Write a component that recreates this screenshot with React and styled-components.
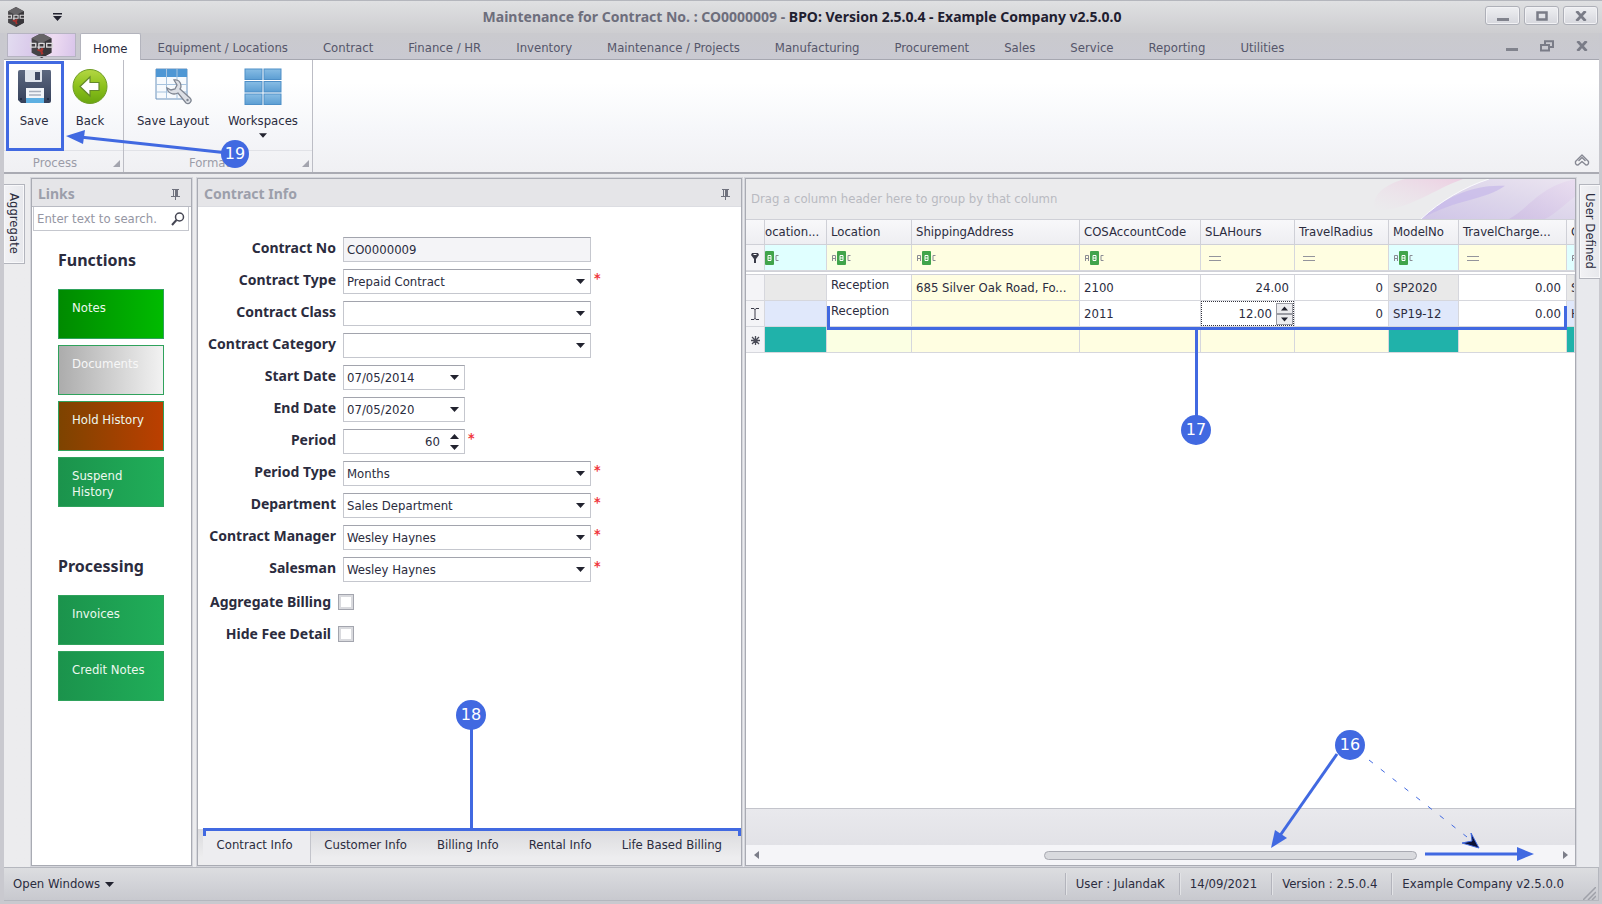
import React from "react";
import styled, { createGlobalStyle, css } from "styled-components";

const ACCENT = "#4169e1";
const LINE = "#a9abb3";
const INK = "#2b2c3e";

const GlobalStyle = createGlobalStyle`
  *, *::before, *::after { box-sizing: border-box; }
  body {
    margin: 0;
    font-family: "DejaVu Sans Condensed", "DejaVu Sans", sans-serif;
    font-size: 13px;
    line-height: 16px;
    color: ${INK};
  }
  button, input, select { font: inherit; color: inherit; margin: 0; }
  button { border: 0; background: none; padding: 0; }
`;

/* ---------- window frame ---------- */

const Window = styled.div`
  display: flex;
  flex-direction: column;
  min-height: 100vh;
  padding: 0 3px 3px 4px;
  background: #c9c9cf;
  border-top: 1px solid #b4b6bd;
`;

const TitleBar = styled.header`
  display: grid;
  grid-template-columns: 1fr auto 1fr;
  align-items: center;
  height: 32px;
  margin: 0 -3px 0 -4px;
  padding: 0 4px 0 6px;
  background: linear-gradient(#dfe0e2, #cdcdd0);
`;

const QuickAccess = styled.div`
  display: flex;
  align-items: center;
  gap: 27px;
`;

const IconButton = styled.button`
  display: flex;
  align-items: center;
  justify-content: center;
  svg { display: block; }
`;

const Title = styled.h1`
  margin: 0;
  font: bold 14px/18px "Noto Sans", sans-serif;
  color: #1f2030;
  white-space: pre;
`;

const TitleMuted = styled.span`
  color: #6d6e7c;
`;

const WindowButtons = styled.div`
  display: flex;
  justify-content: flex-end;
  gap: 4px;
  margin-bottom: 3px;
`;

const WindowButton = styled(IconButton)`
  width: 35px;
  height: 19px;
  border: 1px solid #aeb0b8;
  border-radius: 3px;
  background: linear-gradient(#eeeff2, #d6d7dd);
  box-shadow: inset 0 0 0 1px #f2f2f5;
`;

const TabBar = styled.nav`
  display: flex;
  align-items: flex-end;
  height: 27px;
  border-bottom: 1px solid #a6a7b0;
  background: linear-gradient(#cacace, #c9c9d1);
`;

const AppButton = styled.button`
  display: flex;
  align-items: center;
  justify-content: center;
  width: 69px;
  height: 24px;
  margin: 0 4px 2px 3px;
  border: 1px solid #f4f1f8;
  outline: 1px solid #b6b4c2;
  outline-offset: -1px;
  background: linear-gradient(100deg, #e2dcf0, #d9c8ea 40%, #eedcf2 65%, #d8c4ea);
`;

const RibbonTab = styled.button`
  height: 26px;
  padding: 3px 17px 0;
  margin-right: 1px;
  color: #55566a;
  white-space: nowrap;
  ${(p) =>
    p.$active &&
    css`
      height: 27px;
      padding: 3px 12px 0;
      margin: 0 0 -1px;
      border: 1px solid #b3b4bd;
      border-bottom: 0;
      border-radius: 2px 2px 0 0;
      background: #fff;
      color: ${INK};
    `}
`;

const MdiButtons = styled.div`
  display: flex;
  align-items: center;
  gap: 22px;
  height: 26px;
  margin-left: auto;
  padding-right: 11px;
`;

/* ---------- ribbon ---------- */

const Ribbon = styled.section`
  position: relative;
  display: flex;
  height: 114px;
  border-bottom: 2px solid #aaabb3;
  background: linear-gradient(#ffffff 20%, #f6f7fa 60%, #f0f0f3);
`;

const RibbonGroup = styled.div`
  display: flex;
  flex-direction: column;
  justify-content: space-between;
  width: ${(p) => p.$width}px;
  border-right: 1px solid #bcbdc5;
`;

const RibbonItems = styled.div`
  display: flex;
  padding: 8px 0 0 ${(p) => p.$inset}px;
`;

const RibbonButton = styled.button`
  display: flex;
  flex-direction: column;
  align-items: center;
  width: ${(p) => p.$width}px;
  white-space: nowrap;
  svg { display: block; }
`;

const RibbonLabel = styled.span`
  margin: 8px 0 4px;
`;

const GroupFooter = styled.div`
  display: flex;
  align-items: center;
  justify-content: space-between;
  height: 22px;
  padding: 3px 3px 0 0;
  border-top: 1px solid #e1e2e7;
  color: #9b9ca8;
  text-align: center;
`;

const GroupName = styled.span`
  flex: 1;
  padding-right: 7px;
`;

const CollapseRibbon = styled(IconButton)`
  align-self: flex-end;
  margin: 0 9px 5px auto;
`;

/* ---------- workspace and docked panels ---------- */

const Workspace = styled.main`
  flex: 1;
  display: flex;
  padding: 4px 0 1px;
  background: linear-gradient(90deg, #ececee, #e8e9ed);
`;

const Rail = styled.aside`
  width: ${(p) => (p.$side === "left" ? 27 : 23)}px;
  flex: none;
  padding: 6px 0 0 ${(p) => (p.$side === "left" ? 0 : 3)}px;
`;

const RailTab = styled.button`
  width: 21px;
  padding: 8px 0 9px;
  border: 1px solid #b3b5bd;
  border-${(p) => (p.$side === "left" ? "left" : "right")}: 0;
  background: linear-gradient(90deg, #f2f2f5, #e7e8ec);
  writing-mode: vertical-rl;
  text-align: left;
  line-height: 18px;
  box-shadow: inset 0 0 0 1px #f8f8fa;
`;

const Panel = styled.section`
  position: relative;
  display: flex;
  flex-direction: column;
  flex: ${(p) => (p.$width ? "none" : "1 1 0")};
  width: ${(p) => (p.$width ? p.$width + "px" : "auto")};
  min-width: 0;
  margin: ${(p) => p.$margin || "0"};
  border: 1px solid ${LINE};
  box-shadow: 0 0 0 1px #d5d6dc;
  background: #fff;
`;

const PanelHeader = styled.div`
  display: flex;
  align-items: center;
  justify-content: space-between;
  height: 28px;
  padding: 3px 11px 0 6px;
  border-bottom: 1px solid ${(p) => (p.$ruled ? "#b9bbc3" : "#dcdde2")};
  background: #e5e5e8;
`;

const PanelTitle = styled.h2`
  margin: 0;
  font: bold 14px/18px "Noto Sans", sans-serif;
  color: #9c9fab;
`;

const SearchBox = styled.label`
  display: flex;
  align-items: center;
  height: 24px;
  margin: 0 2px 0 1px;
  padding: 0 3px 0 3px;
  border: 1px solid #c5c7ce;
  border-top: 0;
`;

const SearchInput = styled.input`
  flex: 1;
  min-width: 0;
  padding: 0;
  border: 0;
  outline: 0;
  background: transparent;
  &::placeholder { color: #9596a3; opacity: 1; }
`;

const LinkGroup = styled.section`
  padding: 18px 26px 0;
  margin-bottom: ${(p) => p.$after}px;
`;

const LinkHeading = styled.h3`
  margin: 0 0 18px;
  font: bold 16px/22px "Noto Sans", sans-serif;
`;

const tones = {
  green: "linear-gradient(90deg, #008a00, #00bb00)",
  grey: "linear-gradient(90deg, #acacac, #f2f2f2)",
  rust: "linear-gradient(90deg, #7d4300, #bc3f00)",
  emerald: "linear-gradient(90deg, #1b934c, #20ae59)",
};

const Tile = styled.button`
  display: block;
  width: 100%;
  max-width: 106px;
  height: 50px;
  margin-bottom: 6px;
  padding: 0 20px 0 13px;
  border: 1px solid #2fa25c;
  background: ${(p) => tones[p.$tone]};
  color: ${(p) => (p.$tone === "grey" ? "#f7f7f7" : "#edf8ef")};
  text-align: left;
  white-space: ${(p) => (p.$wrap ? "normal" : "nowrap")};
`;

const TileText = styled.span`
  display: block;
  height: 38px;
  margin-top: 10px;
`;

/* ---------- contract form ---------- */

const Form = styled.form`
  flex: 1;
  display: flex;
  flex-direction: column;
  gap: 7px;
  padding: 30px 0 0;
`;

const Field = styled.div`
  display: grid;
  grid-template-columns: ${(p) => (p.$check ? "133px" : "138px")} auto 1fr;
  align-items: center;
  height: 25px;
`;

const FieldLabel = styled.label`
  padding-bottom: ${(p) => (p.$center ? 0 : 3)}px;
  font: bold 14px/18px "Noto Sans", sans-serif;
  text-align: right;
  white-space: nowrap;
`;

const Control = styled.span`
  display: flex;
  align-items: center;
  position: relative;
  width: ${(p) => (p.$short ? 122 : 248)}px;
  height: 25px;
  margin-left: 7px;
  border: 1px solid #c5c7ce;
  border-top-color: #a2a4ad;
  background: ${(p) => (p.$readOnly ? "#f4f4f7" : "#fff")};
  svg { display: block; }
`;

const TextInput = styled.input`
  flex: 1;
  min-width: 0;
  height: 23px;
  padding: ${(p) => (p.$right ? "0 4px" : "0 3px")};
  border: 0;
  outline: 0;
  background: transparent;
  text-align: ${(p) => (p.$right ? "right" : "left")};
`;

const Select = styled.select`
  flex: 1;
  height: 23px;
  padding: 0 20px 0 3px;
  border: 0;
  outline: 0;
  appearance: none;
  background: transparent;
`;

const SelectArrow = styled.span`
  position: absolute;
  right: 5px;
  pointer-events: none;
`;

const DropButton = styled(IconButton)`
  width: 20px;
  height: 23px;
`;

const Spinner = styled.span`
  display: flex;
  flex-direction: column;
  align-items: center;
  gap: 6px;
  width: 20px;
`;

const Required = styled.span`
  align-self: start;
  padding: 1px 0 0 3px;
  color: #f0353b;
  font: bold 14px/16px "DejaVu Sans Condensed", sans-serif;
`;

const CheckBox = styled.input`
  appearance: none;
  width: 16px;
  height: 16px;
  margin: 0 0 0 7px;
  border: 1px solid #a3a5ae;
  background: #fff;
  box-shadow: inset 0 0 0 2px #d9dade;
`;

const TabStrip = styled.div`
  display: flex;
  height: 36px;
  padding: 0 2px 0 5px;
  background: linear-gradient(#dadadd, #ededef 80%);
`;

const PageTab = styled.button`
  height: 34px;
  padding: 0 17px 2px 13px;
  white-space: nowrap;
  ${(p) =>
    p.$active &&
    css`
      width: 109px;
      padding: 0 4px 2px 0;
      border-right: 1px solid #c3c4cb;
      background: #ededf0;
    `}
`;

/* ---------- grid ---------- */

const GroupBox = styled.div`
  display: flex;
  justify-content: space-between;
  align-items: center;
  height: 40px;
  padding-left: 5px;
  background: #ebebed;
  color: #b9bac1;
  svg { display: block; flex: none; }
`;

const GridTable = styled.table`
  width: 100%;
  table-layout: fixed;
  border-collapse: separate;
  border-spacing: 0;
`;

const HeadCell = styled.th`
  height: 26px;
  padding: ${(p) => (p.$flush ? "0" : "0 0 0 4px")};
  border: solid #cfd0d7;
  border-width: 1px 1px 1px 0;
  background: linear-gradient(#f8f8fa, #eeeef2);
  font-weight: normal;
  text-align: left;
  white-space: nowrap;
  overflow: hidden;
`;

const cellColors = {
  plain: "#ffffff",
  yellow: "#fffee1",
  lime: "#fbffe3",
  cyan: "#e0ffff",
  grey: "#e9e9e9",
  blue: "#e0e8fb",
  teal: "#20b2aa",
  head: "#f4f4f7",
};

const Cell = styled.td`
  height: 26px;
  padding: ${(p) => (p.$flush ? "0" : "0 5px 0 4px")};
  border: solid #d6d7dd;
  border-width: 0 1px 1px 0;
  background: ${(p) => cellColors[p.$color || "plain"]};
  text-align: ${(p) => (p.$align ? p.$align : "left")};
  vertical-align: ${(p) => (p.$top ? "top" : "middle")};
  line-height: ${(p) => (p.$top ? 20 : 16)}px;
  white-space: nowrap;
  overflow: hidden;
  svg { display: inline-block; vertical-align: middle; }
`;

const Divider = styled.td`
  height: 4px;
  padding: 0;
  border-top: 1px solid #d0d1d7;
  border-bottom: 1px solid #d0d1d7;
  background: #fff;
`;

const HourEditor = styled.span`
  display: flex;
  align-items: center;
  height: 25px;
  border: 1px dotted #33343f;
`;

const StepButtons = styled.span`
  display: grid;
  width: 17px;
`;

const StepButton = styled(IconButton)`
  height: 11px;
  border: 1px solid #9a9ba3;
  background: #ececef;
`;

const GridSpace = styled.div`
  flex: 1;
`;

const GridFooter = styled.div`
  height: 37px;
  border-top: 1px solid #c3c4cb;
  background: linear-gradient(#e9e9ed, #e2e2e7);
`;

const ScrollBar = styled.div`
  display: grid;
  grid-template-columns: 20px 1fr 20px;
  align-items: center;
  height: 20px;
  background: #f5f5f8;
`;

const Track = styled.div`
  display: grid;
  grid-template-columns: 279fr 374fr 138fr;
`;

const Thumb = styled.div`
  grid-column: 2;
  height: 9px;
  border: 1px solid #a9aab2;
  border-radius: 5px;
  background: #d9dade;
`;

/* ---------- status bar ---------- */

const StatusBar = styled.footer`
  display: flex;
  align-items: center;
  height: 34px;
  border: 1px solid #b5b7be;
  border-left: 0;
  background: linear-gradient(#dcdde0, #c8c9cf);
`;

const OpenWindows = styled.button`
  display: flex;
  align-items: center;
  gap: 5px;
  margin: 0 auto 0 9px;
`;

const StatusItem = styled.span`
  padding: 3px 14px 3px 10px;
  border-left: 1px solid #b3b4bc;
  box-shadow: inset 1px 0 #e2e3e6;
  &:nth-last-child(2) { padding-right: 11px; }
`;

const Grip = styled.span`
  align-self: flex-end;
  width: 23px;
  padding-left: 8px;
  svg { display: block; }
`;

/* ---------- callouts drawn over the window ---------- */

const Badge = styled.span`
  position: absolute;
  z-index: 3;
  width: ${(p) => p.$size || 30}px;
  height: ${(p) => p.$size || 30}px;
  border-radius: 50%;
  background: ${ACCENT};
  color: #fff;
  font: 16px/${(p) => p.$size || 30}px "DejaVu Sans", sans-serif;
  text-align: center;
`;

const SaveBadge = styled(Badge)`
  left: 217px;
  top: 80px;
`;

const SaveOutline = styled.span`
  position: absolute;
  left: 2px;
  top: 1px;
  width: 58px;
  height: 90px;
  border: 3px solid ${ACCENT};
  pointer-events: none;
`;

const SaveArrow = styled.svg`
  position: absolute;
  left: 56px;
  top: 61px;
  pointer-events: none;
`;

const TabsBracket = styled.span`
  position: absolute;
  left: 5px;
  right: 0;
  bottom: 29px;
  height: 8px;
  border: 3px solid ${ACCENT};
  border-bottom: 0;
`;

const TabsStem = styled.span`
  position: absolute;
  left: 272px;
  bottom: 36px;
  width: 3px;
  height: 100px;
  background: ${ACCENT};
`;

const TabsBadge = styled(Badge)`
  left: 258px;
  bottom: 135px;
`;

const RowBracket = styled.span`
  position: absolute;
  left: 81px;
  top: 127px;
  width: 740px;
  height: 24px;
  border: 3px solid ${ACCENT};
  border-width: 0 3px 3px;
  pointer-events: none;
`;

const RowStem = styled.span`
  position: absolute;
  left: 449px;
  top: 150px;
  width: 3px;
  height: 90px;
  background: ${ACCENT};
`;

const RowBadge = styled(Badge)`
  left: 435px;
  top: 236px;
`;

const ScrollBadge = styled(Badge)`
  right: 210px;
  bottom: 105px;
`;

const ScrollArrows = styled.svg`
  position: absolute;
  right: 0;
  bottom: 0;
  pointer-events: none;
`;

/* ---------- icons ---------- */

const Caret = ({ up, w = 9 }) => (
  <svg width={w} height="5" viewBox="0 0 9 5" aria-hidden="true">
    <path d={up ? "M0 5 4.500 0 9 5z" : "M0 0h9L4.500 5z"} fill="#22232f" />
  </svg>
);

const Hexagon = ({ size }) => (
  <svg width={size} height={size} viewBox="0 0 24 24" aria-hidden="true">
    <path d="M12 0 21.500 5v14L12 24 2.500 19V5z" fill="#454346" />
    <path d="M12 0 21.500 5 12 10 2.500 5z" fill="#666467" />
    <path d="M12 10l9.500-5v14L12 24z" fill="#38363a" />
    <path d="M8 15l3 1 1-2 2 1-1 3 1 2-2 1-1-3-3-1z" fill="#a6332f" />
    <path d="M1.500 8.500v5h5v-3.500h-5M9.500 15.500V10h5v3.500H8M17 10h5.500v3.500H17z" fill="none" stroke="#dcdadc" strokeWidth="1.300" />
  </svg>
);

const Minimize = () => (
  <svg width="12" height="12" viewBox="0 0 12 12" aria-hidden="true">
    <path d="M0 8h12v3H0z" fill="#81838d" />
  </svg>
);
const Maximize = () => (
  <svg width="12" height="10" viewBox="0 0 12 10" aria-hidden="true">
    <path d="M1.500 1.500h9v7h-9z" fill="none" stroke="#7a7c87" strokeWidth="2.500" />
  </svg>
);
const Restore = () => (
  <svg width="14" height="12" viewBox="0 0 14 12" aria-hidden="true">
    <path d="M5 4V1.200h8V7h-3" fill="none" stroke="#7a7c87" strokeWidth="2" />
    <path d="M1 5h8v5.500H1z" fill="none" stroke="#7a7c87" strokeWidth="2" />
  </svg>
);
const Close = () => (
  <svg width="12" height="10" viewBox="0 0 12 10" aria-hidden="true">
    <path d="M1.500 0 10.500 10M10.500 0 1.500 10" stroke="#7a7c87" strokeWidth="2.800" />
  </svg>
);

const SaveIcon = () => (
  <svg width="35" height="37" viewBox="0 0 35 37" aria-hidden="true">
    <defs>
      <linearGradient id="disk" x1="0" y1="0" x2="0" y2="1">
        <stop offset="0" stopColor="#5c6880" />
        <stop offset="1" stopColor="#35405a" />
      </linearGradient>
    </defs>
    <path d="M1 4q0-2 2-2h30q1 0 1 2v29q0 2-2 2H4l-3-3z" fill="url(#disk)" />
    <path d="M8 2h17v11q0 1-1 1H9q-1 0-1-1z" fill="#dfe4ec" />
    <path d="M18 4h5v8h-5z" fill="#3f4963" />
    <path d="M9 20h18v15H9z" fill="#f2f5f9" />
    <path d="M9 30h18v5H9z" fill="#5eb0e2" />
    <path d="M12 23.500h12M12 27h12" stroke="#a7afbd" strokeWidth="1.500" />
    <path d="M3 30h2v2H3zM30 30h2v2h-2z" fill="#1f2940" />
  </svg>
);

const BackIcon = () => (
  <svg width="36" height="37" viewBox="0 0 36 37" aria-hidden="true">
    <defs>
      <linearGradient id="lime" x1="0" y1="0" x2="0" y2="1">
        <stop offset="0" stopColor="#b4d743" />
        <stop offset="0.500" stopColor="#8cc11c" />
        <stop offset="1" stopColor="#6aa60f" />
      </linearGradient>
    </defs>
    <circle cx="18" cy="18.500" r="17" fill="url(#lime)" stroke="#6f9d26" />
    <path d="M8 18.500 18 9v5.500h9v8h-9V28z" fill="#fff" stroke="#64892b" strokeWidth="1.200" />
  </svg>
);

const LayoutIcon = () => (
  <svg width="37" height="37" viewBox="0 0 37 37" aria-hidden="true">
    <path d="M1 1h31v30H1z" fill="#f7fafd" stroke="#6d93bd" />
    <path d="M1 1h31v8H1z" fill="#4f97d4" />
    <path d="M1 16.500h31M1 24h31M11.500 1v30M22 1v30" stroke="#a7c3de" />
    <path
      d="M19 12c4-1 7 2 7 6 0 1 0 2-1 3l10 9c3 3-1 7-4 5l-8-10c-4 2-10 1-11-5l4 2 4-1 2-4z"
      fill="#dcdfe5"
      stroke="#7f8591"
      strokeWidth="1.300"
    />
    <circle cx="32.500" cy="32" r="1.200" fill="#7f8591" />
  </svg>
);

const WorkspacesIcon = () => (
  <svg width="38" height="37" viewBox="0 0 38 37" aria-hidden="true">
    <defs>
      <linearGradient id="pane" x1="0" y1="0" x2="0" y2="1">
        <stop offset="0" stopColor="#88bde4" />
        <stop offset="1" stopColor="#5c9ed3" />
      </linearGradient>
    </defs>
    {[0, 1, 2].map((r) =>
      [0, 1].map((c) => (
        <rect key={r + "-" + c} x={1 + c * 19} y={1 + r * 12.500} width="17" height="10.500" fill="url(#pane)" stroke="#4e8fc7" />
      ))
    )}
  </svg>
);

const LauncherIcon = () => (
  <svg width="7" height="7" viewBox="0 0 7 7" aria-hidden="true">
    <path d="M7 0v7H0z" fill="#a3a4ae" />
  </svg>
);

const ChevronUp = () => (
  <svg width="16" height="13" viewBox="0 0 16 13" aria-hidden="true">
    <path
      d="M8 1 14.500 7.500Q15 11 12 11L8 7.500 4 11Q1 11 1.500 7.500zM4.500 7 8 3.500 11.500 7"
      fill="#f6f6f8"
      stroke="#868893"
      strokeWidth="1.400"
      strokeLinejoin="round"
    />
  </svg>
);

const Pin = () => (
  <svg width="9" height="11" viewBox="0 0 9 11" aria-hidden="true">
    <path d="M1 .500h7M2.500 1v6M0 7.500h9M4.500 8v3" stroke="#6f717d" fill="none" />
    <path d="M4 1h3v6H4z" fill="#6f717d" />
  </svg>
);

const Magnifier = () => (
  <svg width="14" height="14" viewBox="0 0 14 14" aria-hidden="true">
    <circle cx="8.500" cy="5" r="4" fill="none" stroke="#454653" strokeWidth="1.500" />
    <path d="M5.500 8 1 13" stroke="#454653" strokeWidth="2" />
  </svg>
);

const Abc = ({ cut }) => (
  <svg width={cut ? 14 : 20} height="14" viewBox={cut ? "6 0 14 14" : "0 0 20 14"} aria-hidden="true">
    <path d="M1.500 10V4.500h3V10M1.500 7.500H4" fill="none" stroke="#8a8b94" />
    <rect x="6" y="0" width="9" height="14" rx="1" fill="#41a44b" />
    <path d="M9 4.500h3v5H9zM9 7h3" fill="none" stroke="#fff" />
    <path d="M19.500 4.500H17v5h2.500" fill="none" stroke="#8a8b94" />
  </svg>
);

const Equals = () => (
  <svg width="12" height="5" viewBox="0 0 12 5" aria-hidden="true">
    <path d="M0 .500h12M0 4.500h12" stroke="#93949c" />
  </svg>
);

const FilterMark = () => (
  <svg width="8" height="10" viewBox="0 0 8 10" aria-hidden="true">
    <path d="M1 0h6l1 2-3 4v4H3V6L0 2z" fill="#3a3b48" />
    <path d="M2.500 1.500h3" stroke="#fff" />
  </svg>
);

const EditMark = () => (
  <svg width="8" height="12" viewBox="0 0 8 12" aria-hidden="true">
    <path d="M0 .500h3L4 1.500 5 .500h3M4 1v10M0 11.500h3l1-1 1 1h3" stroke="#3a3b48" fill="none" />
  </svg>
);

const NewMark = () => (
  <svg width="9" height="9" viewBox="0 0 9 9" aria-hidden="true">
    <path d="M4.500 0v9M0 4.500h9M1 1l7 7M8 1 1 8" stroke="#4a4b57" strokeWidth="1.300" />
  </svg>
);

const Petals = () => (
  <svg width="230" height="40" viewBox="0 0 230 41" preserveAspectRatio="none" aria-hidden="true">
    <defs>
      <linearGradient id="pink" x1="0" y1="1" x2="1" y2="0">
        <stop offset="0" stopColor="#ecdfe9" stopOpacity="0" />
        <stop offset="1" stopColor="#edcfe2" />
      </linearGradient>
      <linearGradient id="violet" x1="0" y1="1" x2="1" y2="0">
        <stop offset="0" stopColor="#c9bce6" />
        <stop offset="0.500" stopColor="#d9d0ea" />
        <stop offset="1" stopColor="#ece4f2" />
      </linearGradient>
      <linearGradient id="rose" x1="0" y1="1" x2="1" y2="0">
        <stop offset="0" stopColor="#cbb8e2" />
        <stop offset="1" stopColor="#e8d9ef" />
      </linearGradient>
    </defs>
    <path d="M30 32C25 14 45 4 60 0h58C90 10 60 34 30 32z" fill="url(#pink)" />
    <path d="M76 41C96 22 120 8 144 0h86v41z" fill="url(#violet)" opacity="0.800" />
    <path d="M76 41C100 18 130 5 160 7 140 22 112 20 76 41z" fill="#c6b8ea" opacity="0.700" />
    <path d="M164 41C184 30 194 8 230 0v18c-10 8-20 18-30 23z" fill="url(#rose)" opacity="0.600" />
    <path d="M76 41C96 22 120 8 144 0" stroke="#fafafd" strokeWidth="1" fill="none" />
  </svg>
);

/* ---------- data ---------- */

const ribbonTabs = [
  "Equipment / Locations", "Contract", "Finance / HR", "Inventory", "Maintenance / Projects",
  "Manufacturing", "Procurement", "Sales", "Service", "Reporting", "Utilities",
];

const columns = [
  ["indicator", "", 19], ["loc", "ocation...", 62], ["Location", "Location", 85],
  ["ShippingAddress", "ShippingAddress", 168], ["COSAccountCode", "COSAccountCode", 121],
  ["SLAHours", "SLAHours", 94], ["TravelRadius", "TravelRadius", 94],
  ["ModelNo", "ModelNo", 70], ["TravelCharge", "TravelCharge...", 108], ["next", "C", 0],
];

const fields = [
  { id: "no", label: "Contract No", kind: "readonly", value: "CO0000009" },
  { id: "type", label: "Contract Type", kind: "select", value: "Prepaid Contract", required: true },
  { id: "class", label: "Contract Class", kind: "select", value: "" },
  { id: "category", label: "Contract Category", kind: "select", value: "" },
  { id: "start", label: "Start Date", kind: "date", value: "07/05/2014" },
  { id: "end", label: "End Date", kind: "date", value: "07/05/2020" },
  { id: "period", label: "Period", kind: "spin", value: "60", required: true },
  { id: "ptype", label: "Period Type", kind: "select", value: "Months", required: true },
  { id: "dept", label: "Department", kind: "select", value: "Sales Department", required: true },
  { id: "manager", label: "Contract Manager", kind: "select", value: "Wesley Haynes", required: true },
  { id: "sales", label: "Salesman", kind: "select", value: "Wesley Haynes", required: true },
];

function FieldControl({ id, kind, value }) {
  if (kind === "select") {
    return (
      <Control>
        <Select id={id} defaultValue={value}>
          <option>{value}</option>
        </Select>
        <SelectArrow><Caret /></SelectArrow>
      </Control>
    );
  }
  return (
    <Control $short={kind !== "readonly"} $readOnly={kind === "readonly"}>
      <TextInput id={id} defaultValue={value} readOnly={kind === "readonly"} $right={kind === "spin"} />
      {kind === "date" && (
        <DropButton type="button" aria-label="Open calendar"><Caret /></DropButton>
      )}
      {kind === "spin" && (
        <Spinner>
          <IconButton type="button" aria-label="Increase"><Caret up /></IconButton>
          <IconButton type="button" aria-label="Decrease"><Caret /></IconButton>
        </Spinner>
      )}
    </Control>
  );
}

function ContractGrid() {
  return (
    <GridTable>
      <colgroup>
        {columns.map(([key, , width]) => (
          <col key={key} width={width || undefined} />
        ))}
      </colgroup>
      <thead>
        <tr>
          {columns.map(([key, text]) => (
            <HeadCell key={key} scope="col" $flush={key === "loc"}>{text}</HeadCell>
          ))}
        </tr>
        <tr>
          <Cell $color="head" $align="center" $flush><FilterMark /></Cell>
          <Cell $color="cyan" $flush><Abc cut /></Cell>
          <Cell $color="lime"><Abc /></Cell>
          <Cell $color="yellow"><Abc /></Cell>
          <Cell $color="yellow"><Abc /></Cell>
          <Cell $color="yellow">&nbsp;<Equals /></Cell>
          <Cell $color="yellow">&nbsp;<Equals /></Cell>
          <Cell $color="cyan"><Abc /></Cell>
          <Cell $color="yellow">&nbsp;<Equals /></Cell>
          <Cell $color="cyan"><Abc /></Cell>
        </tr>
        <tr><Divider colSpan={10} /></tr>
      </thead>
      <tbody>
        <tr>
          <Cell $color="head" />
          <Cell $color="grey" />
          <Cell $top>Reception</Cell>
          <Cell $color="yellow">685 Silver Oak Road, Fo...</Cell>
          <Cell>2100</Cell>
          <Cell $align="right">24.00</Cell>
          <Cell $align="right">0</Cell>
          <Cell $color="grey">SP2020</Cell>
          <Cell $align="right">0.00</Cell>
          <Cell $color="grey">S</Cell>
        </tr>
        <tr>
          <Cell $color="head" $align="center" $flush><EditMark /></Cell>
          <Cell $color="blue" />
          <Cell $top>Reception</Cell>
          <Cell $color="yellow" />
          <Cell>2011</Cell>
          <Cell $flush>
            <HourEditor>
              <TextInput aria-label="SLAHours" defaultValue="12.00" $right />
              <StepButtons>
                <StepButton type="button" aria-label="More hours"><Caret up w={7} /></StepButton>
                <StepButton type="button" aria-label="Fewer hours"><Caret w={7} /></StepButton>
              </StepButtons>
            </HourEditor>
          </Cell>
          <Cell $align="right">0</Cell>
          <Cell $color="blue">SP19-12</Cell>
          <Cell $align="right">0.00</Cell>
          <Cell $color="blue">H</Cell>
        </tr>
        <tr>
          <Cell $color="head" $align="center" $flush><NewMark /></Cell>
          <Cell $color="teal" />
          <Cell $color="lime" />
          <Cell $color="yellow" />
          <Cell $color="yellow" />
          <Cell $color="yellow" />
          <Cell $color="yellow" />
          <Cell $color="teal" />
          <Cell $color="yellow" />
          <Cell $color="teal" />
        </tr>
      </tbody>
    </GridTable>
  );
}

export default function App() {
  return (
    <Window>
      <GlobalStyle />
      <TitleBar>
        <QuickAccess>
          <Hexagon size={20} />
          <IconButton aria-label="Customize quick access">
            <svg width="9" height="8" viewBox="0 0 9 8" aria-hidden="true">
              <path d="M0 0h9v1.500H0zM0 3h9L4.500 8z" fill="#22232f" />
            </svg>
          </IconButton>
        </QuickAccess>
        <Title>
          <TitleMuted>Maintenance for Contract No. : CO0000009 - </TitleMuted>
          BPO: Version 2.5.0.4 - Example Company v2.5.0.0
        </Title>
        <WindowButtons>
          <WindowButton aria-label="Minimize"><Minimize /></WindowButton>
          <WindowButton aria-label="Maximize"><Maximize /></WindowButton>
          <WindowButton aria-label="Close"><Close /></WindowButton>
        </WindowButtons>
      </TitleBar>

      <TabBar>
        <AppButton aria-label="Application menu"><Hexagon size={25} /></AppButton>
        <RibbonTab $active>Home</RibbonTab>
        {ribbonTabs.map((tab) => (
          <RibbonTab key={tab}>{tab}</RibbonTab>
        ))}
        <MdiButtons>
          <IconButton aria-label="Minimize document"><Minimize /></IconButton>
          <IconButton aria-label="Restore document"><Restore /></IconButton>
          <IconButton aria-label="Close document"><Close /></IconButton>
        </MdiButtons>
      </TabBar>

      <Ribbon>
        <RibbonGroup $width={120}>
          <RibbonItems $inset={2}>
            <RibbonButton $width={56}><SaveIcon /><RibbonLabel>Save</RibbonLabel></RibbonButton>
            <RibbonButton $width={56}><BackIcon /><RibbonLabel>Back</RibbonLabel></RibbonButton>
          </RibbonItems>
          <GroupFooter><GroupName>Process</GroupName><LauncherIcon /></GroupFooter>
        </RibbonGroup>
        <RibbonGroup $width={189}>
          <RibbonItems $inset={4}>
            <RibbonButton $width={90}><LayoutIcon /><RibbonLabel>Save Layout</RibbonLabel></RibbonButton>
            <RibbonButton $width={90}><WorkspacesIcon /><RibbonLabel>Workspaces</RibbonLabel><Caret w={8} /></RibbonButton>
          </RibbonItems>
          <GroupFooter><GroupName>Format</GroupName><LauncherIcon /></GroupFooter>
        </RibbonGroup>
        <CollapseRibbon aria-label="Collapse ribbon"><ChevronUp /></CollapseRibbon>
        <SaveOutline />
        <SaveArrow width="170" height="50" viewBox="0 0 170 50" aria-hidden="true">
          <path d="M20 16 168 32" stroke={ACCENT} strokeWidth="3" />
          <path d="M6 15 25 9 23 23z" fill={ACCENT} />
        </SaveArrow>
        <SaveBadge $size={28}>19</SaveBadge>
      </Ribbon>

      <Workspace>
        <Rail $side="left"><RailTab $side="left">Aggregate</RailTab></Rail>

        <Panel $width={161}>
          <PanelHeader $ruled>
            <PanelTitle>Links</PanelTitle>
            <IconButton aria-label="Pin Links"><Pin /></IconButton>
          </PanelHeader>
          <SearchBox>
            <SearchInput aria-label="Search links" placeholder="Enter text to search." />
            <Magnifier />
          </SearchBox>
          <LinkGroup $after={24}>
            <LinkHeading>Functions</LinkHeading>
            <Tile $tone="green"><TileText>Notes</TileText></Tile>
            <Tile $tone="grey"><TileText>Documents</TileText></Tile>
            <Tile $tone="rust"><TileText>Hold History</TileText></Tile>
            <Tile $tone="emerald" $wrap><TileText>Suspend History</TileText></Tile>
          </LinkGroup>
          <LinkGroup $after={0}>
            <LinkHeading>Processing</LinkHeading>
            <Tile $tone="emerald"><TileText>Invoices</TileText></Tile>
            <Tile $tone="emerald"><TileText>Credit Notes</TileText></Tile>
          </LinkGroup>
        </Panel>

        <Panel $width={545} $margin="0 3px 0 5px">
          <PanelHeader>
            <PanelTitle>Contract Info</PanelTitle>
            <IconButton aria-label="Pin Contract Info"><Pin /></IconButton>
          </PanelHeader>
          <Form>
            {fields.map((f) => (
              <Field key={f.id}>
                <FieldLabel htmlFor={f.id}>{f.label}</FieldLabel>
                <FieldControl {...f} />
                {f.required && <Required>*</Required>}
              </Field>
            ))}
            <Field $check>
              <FieldLabel $center htmlFor="aggregate">Aggregate Billing</FieldLabel>
              <CheckBox id="aggregate" type="checkbox" />
            </Field>
            <Field $check>
              <FieldLabel $center htmlFor="hidefee">Hide Fee Detail</FieldLabel>
              <CheckBox id="hidefee" type="checkbox" />
            </Field>
          </Form>
          <TabStrip>
            <PageTab $active>Contract Info</PageTab>
            <PageTab>Customer Info</PageTab>
            <PageTab>Billing Info</PageTab>
            <PageTab>Rental Info</PageTab>
            <PageTab>Life Based Billing</PageTab>
          </TabStrip>
          <TabsBracket />
          <TabsStem />
          <TabsBadge>18</TabsBadge>
        </Panel>

        <Panel>
          <GroupBox>
            Drag a column header here to group by that column
            <Petals />
          </GroupBox>
          <ContractGrid />
          <GridSpace />
          <GridFooter />
          <ScrollBar>
            <IconButton aria-label="Scroll left">
              <svg width="5" height="8" viewBox="0 0 5 8" aria-hidden="true"><path d="M5 0v8L0 4z" fill="#7c7e89" /></svg>
            </IconButton>
            <Track><Thumb /></Track>
            <IconButton aria-label="Scroll right">
              <svg width="5" height="8" viewBox="0 0 5 8" aria-hidden="true"><path d="M0 0v8l5-4z" fill="#7c7e89" /></svg>
            </IconButton>
          </ScrollBar>
          <RowBracket />
          <RowStem />
          <RowBadge>17</RowBadge>
          <ScrollBadge>16</ScrollBadge>
          <ScrollArrows width="330" height="159" viewBox="0 0 330 159" aria-hidden="true">
            <path d="M92 48 34 131" stroke={ACCENT} strokeWidth="3" />
            <path d="M26 142 30 124 42 132z" fill={ACCENT} />
            <path d="M124 54 222 131" stroke={ACCENT} strokeWidth="1" strokeDasharray="5 10" />
            <path d="M234 142 226 127 227 135 217 137z" fill="#0b1136" stroke={ACCENT} strokeWidth="1" />
            <path d="M180 148H275" stroke={ACCENT} strokeWidth="3" />
            <path d="M289 148 272 141v14z" fill={ACCENT} />
          </ScrollArrows>
        </Panel>

        <Rail $side="right"><RailTab $side="right">User Defined</RailTab></Rail>
      </Workspace>

      <StatusBar>
        <OpenWindows>Open Windows <Caret /></OpenWindows>
        <StatusItem>User : JulandaK</StatusItem>
        <StatusItem>14/09/2021</StatusItem>
        <StatusItem>Version : 2.5.0.4</StatusItem>
        <StatusItem>Example Company v2.5.0.0</StatusItem>
        <Grip>
          <svg width="13" height="13" viewBox="0 0 13 13" aria-hidden="true">
            <path d="M0 13 13 0M5 13l8-8M9 13l4-4" stroke="#9fa1a9" strokeWidth="1.500" />
          </svg>
        </Grip>
      </StatusBar>
    </Window>
  );
}
